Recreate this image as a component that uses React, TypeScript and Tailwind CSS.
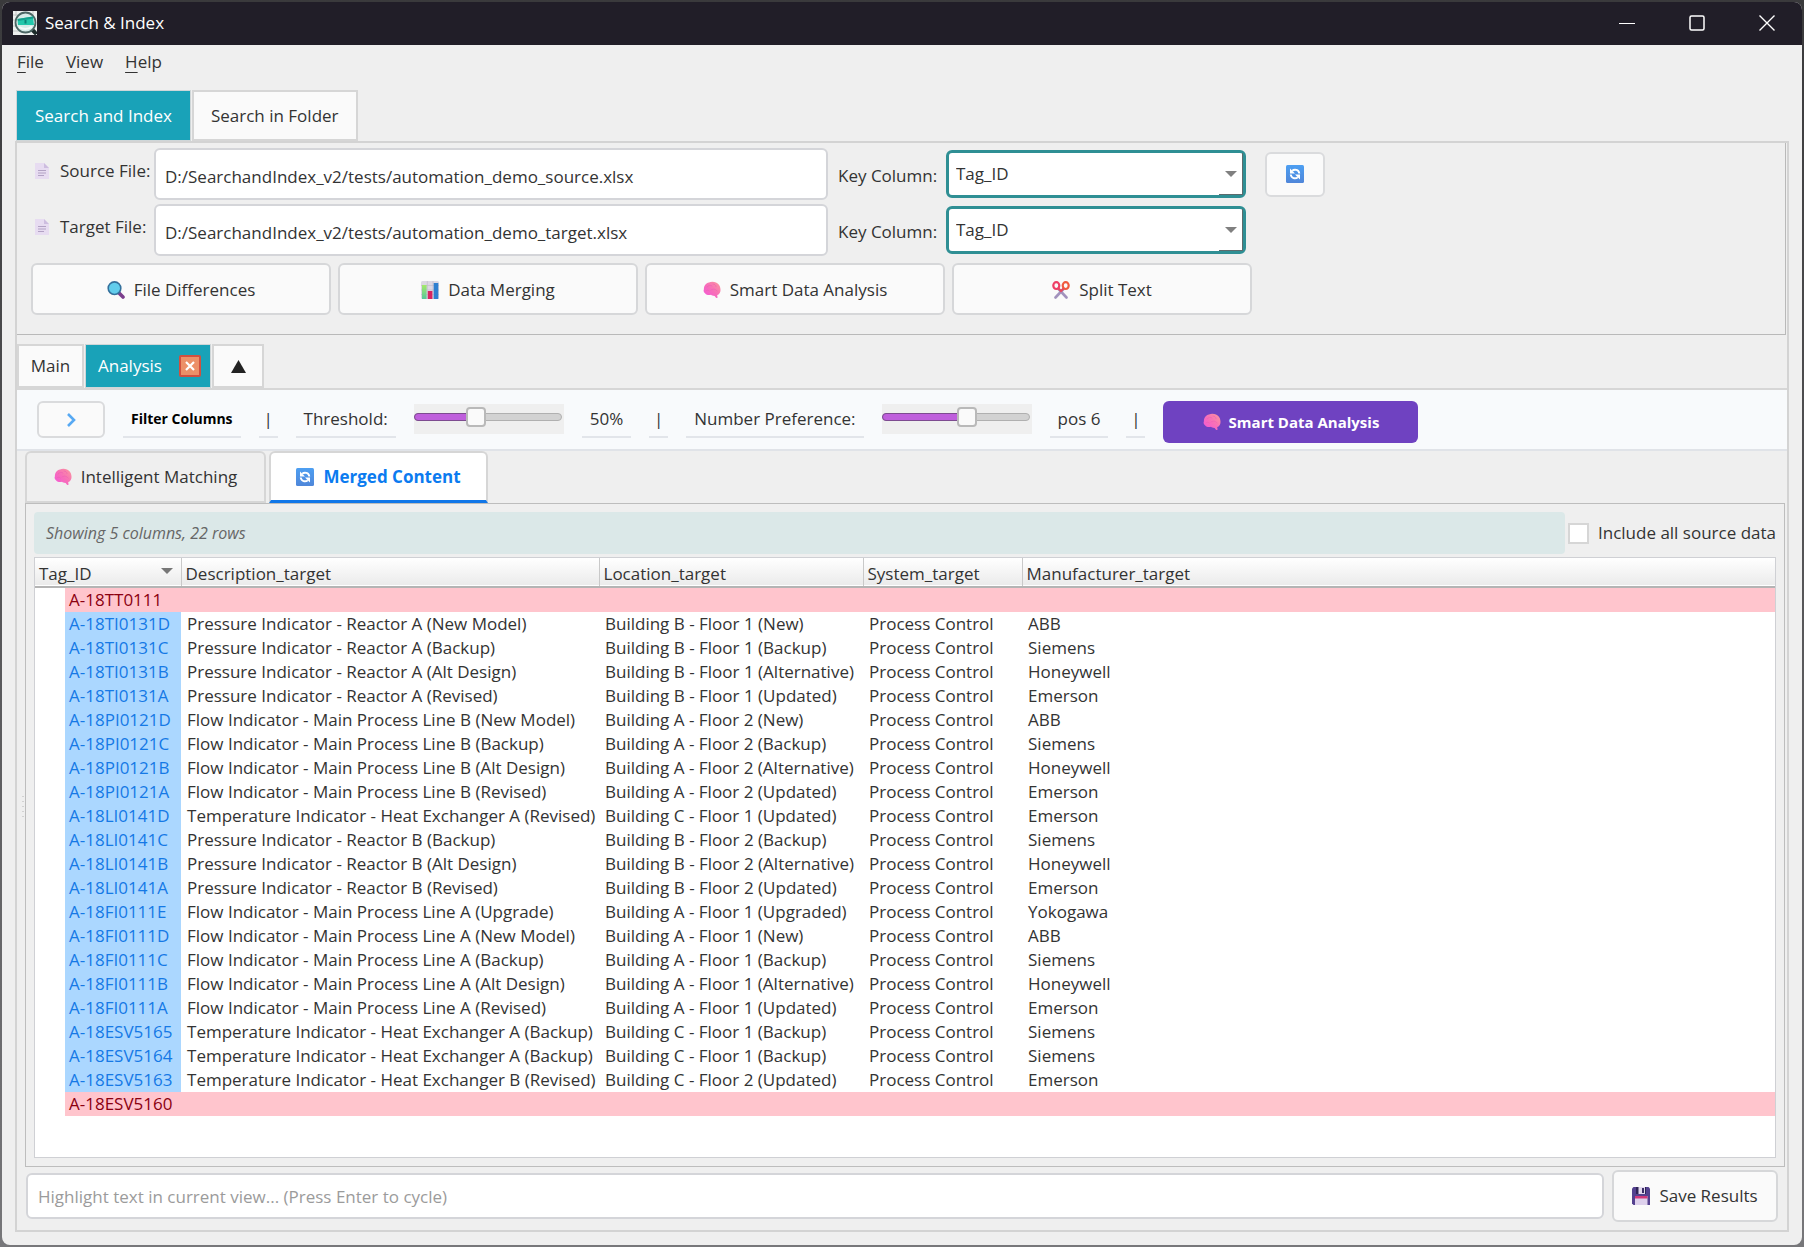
import { useState } from "react";
import type { ReactNode } from "react";

type Row = { tag: string; desc?: string; loc?: string; maker?: string };

const rows: Row[] = [
  { tag: "A-18TT0111" },
  { tag: "A-18TI0131D", desc: "Pressure Indicator - Reactor A (New Model)", loc: "Building B - Floor 1 (New)", maker: "ABB" },
  { tag: "A-18TI0131C", desc: "Pressure Indicator - Reactor A (Backup)", loc: "Building B - Floor 1 (Backup)", maker: "Siemens" },
  { tag: "A-18TI0131B", desc: "Pressure Indicator - Reactor A (Alt Design)", loc: "Building B - Floor 1 (Alternative)", maker: "Honeywell" },
  { tag: "A-18TI0131A", desc: "Pressure Indicator - Reactor A (Revised)", loc: "Building B - Floor 1 (Updated)", maker: "Emerson" },
  { tag: "A-18PI0121D", desc: "Flow Indicator - Main Process Line B (New Model)", loc: "Building A - Floor 2 (New)", maker: "ABB" },
  { tag: "A-18PI0121C", desc: "Flow Indicator - Main Process Line B (Backup)", loc: "Building A - Floor 2 (Backup)", maker: "Siemens" },
  { tag: "A-18PI0121B", desc: "Flow Indicator - Main Process Line B (Alt Design)", loc: "Building A - Floor 2 (Alternative)", maker: "Honeywell" },
  { tag: "A-18PI0121A", desc: "Flow Indicator - Main Process Line B (Revised)", loc: "Building A - Floor 2 (Updated)", maker: "Emerson" },
  { tag: "A-18LI0141D", desc: "Temperature Indicator - Heat Exchanger A (Revised)", loc: "Building C - Floor 1 (Updated)", maker: "Emerson" },
  { tag: "A-18LI0141C", desc: "Pressure Indicator - Reactor B (Backup)", loc: "Building B - Floor 2 (Backup)", maker: "Siemens" },
  { tag: "A-18LI0141B", desc: "Pressure Indicator - Reactor B (Alt Design)", loc: "Building B - Floor 2 (Alternative)", maker: "Honeywell" },
  { tag: "A-18LI0141A", desc: "Pressure Indicator - Reactor B (Revised)", loc: "Building B - Floor 2 (Updated)", maker: "Emerson" },
  { tag: "A-18FI0111E", desc: "Flow Indicator - Main Process Line A (Upgrade)", loc: "Building A - Floor 1 (Upgraded)", maker: "Yokogawa" },
  { tag: "A-18FI0111D", desc: "Flow Indicator - Main Process Line A (New Model)", loc: "Building A - Floor 1 (New)", maker: "ABB" },
  { tag: "A-18FI0111C", desc: "Flow Indicator - Main Process Line A (Backup)", loc: "Building A - Floor 1 (Backup)", maker: "Siemens" },
  { tag: "A-18FI0111B", desc: "Flow Indicator - Main Process Line A (Alt Design)", loc: "Building A - Floor 1 (Alternative)", maker: "Honeywell" },
  { tag: "A-18FI0111A", desc: "Flow Indicator - Main Process Line A (Revised)", loc: "Building A - Floor 1 (Updated)", maker: "Emerson" },
  { tag: "A-18ESV5165", desc: "Temperature Indicator - Heat Exchanger A (Backup)", loc: "Building C - Floor 1 (Backup)", maker: "Siemens" },
  { tag: "A-18ESV5164", desc: "Temperature Indicator - Heat Exchanger A (Backup)", loc: "Building C - Floor 1 (Backup)", maker: "Siemens" },
  { tag: "A-18ESV5163", desc: "Temperature Indicator - Heat Exchanger B (Revised)", loc: "Building C - Floor 2 (Updated)", maker: "Emerson" },
  { tag: "A-18ESV5160" },
];

function AppIcon() {
  return (
    <svg className="size-6 shrink-0" viewBox="0 0 24 24" aria-hidden="true">
      <rect width="24" height="24" fill="#eef0ef" />
      <path d="M0 4h5M0 9h3M0 15h3M0 20h6M3 0v5M20 0v4" stroke="#c3c8c7" strokeWidth="1" />
      <path d="M18 17.500l5.500 5.500" stroke="#1d2b2a" strokeWidth="4" />
      <circle cx="12.500" cy="11.500" r="10" fill="#d6ebe8" stroke="#4c6664" strokeWidth="1.800" />
      <path d="M4.500 8 20 5.500l1 8.500H5z" fill="#22c7ab" />
      <path d="M4.500 8 20 5.500l.3 2L5 10z" fill="#149f8c" />
      <path d="M11.500 9h2v3.500h-2z" fill="#0b8579" />
      <path d="M6 16c4 2.500 9 2.500 13-.5" stroke="#f4fbfa" strokeWidth="2" fill="none" />
    </svg>
  );
}

function PageIcon() {
  return (
    <svg className="h-4 w-[14px] shrink-0" viewBox="0 0 14 16" aria-hidden="true">
      <path d="M0 0h9l5 5v11H0z" fill="#e7dcf1" />
      <path d="M9 0l5 5H9z" fill="#cdbddf" />
      <path d="M3 7.500h8M3 10h8M3 12.500h6" stroke="#b2a2c4" strokeWidth="1" />
    </svg>
  );
}

function SearchIcon() {
  return (
    <svg className="size-[18px] shrink-0" viewBox="0 0 18 18" aria-hidden="true">
      <path d="M11.500 11.500l4.500 4.500" stroke="#7b3f8d" strokeWidth="3.600" strokeLinecap="round" />
      <circle cx="7.500" cy="7.200" r="6.300" fill="#62cdec" stroke="#34709c" strokeWidth="1.600" />
    </svg>
  );
}

function ChartIcon() {
  return (
    <svg className="size-[18px] shrink-0" viewBox="0 0 18 18" aria-hidden="true">
      <defs>
        <linearGradient id="barGreen" x1="0" y1="0" x2="0" y2="1">
          <stop offset="0" stopColor="#a5e86b" />
          <stop offset="1" stopColor="#57c79a" />
        </linearGradient>
      </defs>
      <rect width="18" height="18" rx="1.500" fill="#dcd7e3" />
      <path d="M0 4.500h18M0 9h18M0 13.500h18M6.300 0v18M12 0v18" stroke="#c2bccb" strokeWidth=".7" />
      <rect x="1" y="4" width="4.600" height="14" fill="url(#barGreen)" />
      <rect x="6.800" y="10" width="4.600" height="8" fill="#d8245f" />
      <rect x="12.700" y="2" width="4.600" height="16" fill="#2f7fd0" />
    </svg>
  );
}

function BrainIcon() {
  return (
    <svg className="size-[18px] shrink-0" viewBox="0 0 18 18" aria-hidden="true">
      <defs>
        <linearGradient id="brainPink" x1="1" y1="0" x2="0" y2="1">
          <stop offset="0" stopColor="#fb9a9c" />
          <stop offset=".5" stopColor="#f76fb8" />
          <stop offset="1" stopColor="#f553dc" />
        </linearGradient>
      </defs>
      <path
        d="M6 1.500C8 .3 11 .4 13 1.600c2.400.9 4 3 4.300 5.400.5 2.300.3 4.600-1.300 6-.5.600-1.200.9-1.800 1l.4 2.800-1.400.300-1.600-2.200c-1.900-.1-2.900-.5-3.600-1.100-2.200.6-4.600.1-5.800-1.300-1.500-1-2-2.700-1.300-4.200C.8 4.600 3 2 6 1.500z"
        fill="url(#brainPink)"
      />
      <path
        d="M4 6c1.500-2 3.500-2 5-1M10 3c1.500 0 3 1 3 2.500M8 9c2-1.500 5-1 6 1M3 10c1-1 2.500-1 3.500 0"
        stroke="#ee62b4"
        strokeWidth=".7"
        fill="none"
        strokeLinecap="round"
      />
    </svg>
  );
}

function ScissorsIcon() {
  return (
    <svg className="size-[18px] shrink-0" viewBox="0 0 18 18" fill="none" aria-hidden="true">
      <path d="M6.500 8 14.500 16.500M11.500 8 3.500 16.500" stroke="#a292bd" strokeWidth="2.600" strokeLinecap="round" />
      <ellipse cx="4.300" cy="4.600" rx="3" ry="3.400" stroke="#ee3f66" strokeWidth="2.200" />
      <ellipse cx="13.700" cy="4.600" rx="3" ry="3.400" stroke="#f0593f" strokeWidth="2.200" />
      <path d="M6.500 7.500 9 10l2.500-2.500" stroke="#e8475f" strokeWidth="2" />
    </svg>
  );
}

function SyncIcon() {
  return (
    <svg className="size-[18px] shrink-0" viewBox="0 0 18 18" fill="none" aria-hidden="true">
      <defs>
        <linearGradient id="syncBlue" x1="0" y1="0" x2="0" y2="1">
          <stop offset="0" stopColor="#4d9ff2" />
          <stop offset="1" stopColor="#4f86d9" />
        </linearGradient>
      </defs>
      <rect width="18" height="18" rx="1.500" fill="url(#syncBlue)" />
      <path d="M6.200 5.800C8.500 3.800 12.800 4.500 13.300 8.500M11.800 12.200C9.500 14.200 5.200 13.500 4.700 9.500" stroke="#fff" strokeWidth="1.900" />
      <path d="M4 3.500v5h5zM14 14.500v-5H9z" fill="#fff" />
    </svg>
  );
}

function FloppyIcon() {
  return (
    <svg className="size-[18px] shrink-0" viewBox="0 0 18 18" aria-hidden="true">
      <path d="M0 1.500 1.500 0h15L18 1.500V18H1.500L0 16.500z" fill="#54418f" />
      <rect x="4" width="10" height="7" fill="#2f2457" />
      <rect x="6.500" width="6.500" height="7" fill="#e2d9ee" />
      <rect x="10" y="1" width="2" height="5" fill="#3b2d66" />
      <rect x="3" y="9" width="12.500" height="9" fill="#ddd0ec" />
      <rect x="3" y="9" width="12.500" height="2.500" fill="#d1397b" />
    </svg>
  );
}

function FileRow({ id, label, value }: { id: string; label: string; value: string }) {
  const key = id + "-key";
  return (
    <div className="flex items-center">
      <label htmlFor={id} className="mb-[6px] flex w-[119px] items-center gap-[11px]">
        <PageIcon />
        <span className="whitespace-nowrap">{label}</span>
      </label>
      <input
        id={id}
        defaultValue={value}
        className="h-[52px] w-[674px] rounded-md border-2 border-[#d4d5d9] bg-white px-[9px] pt-1 outline-none"
      />
      <label htmlFor={key} className="ml-[10px] w-[108px] pt-[3px] whitespace-nowrap">
        Key Column:
      </label>
      <div className="relative">
        <select
          id={key}
          className="block h-12 w-[300px] appearance-none rounded-md border-[3px] border-[#2f8f94] bg-white px-[7px] outline-none"
        >
          <option>Tag_ID</option>
        </select>
        <div className="pointer-events-none absolute right-[3px] bottom-[3px] h-[42px] w-6 border-r border-b border-[#5c6b6d]" />
        <svg className="pointer-events-none absolute top-[21px] right-[9px] h-[6px] w-3" viewBox="0 0 12 6" aria-hidden="true">
          <path d="M0 0h12L6 6z" fill="#808080" />
        </svg>
      </div>
      {id === "source" && (
        <button
          aria-label="Reload columns"
          className="ml-[19px] flex h-[45px] w-[60px] items-center justify-center rounded-md border-2 border-[#dadbdd] bg-[#fafafa]"
        >
          <SyncIcon />
        </button>
      )}
    </div>
  );
}

function ActionButton({ icon, children }: { icon: ReactNode; children: ReactNode }) {
  return (
    <button className="flex h-[52px] w-[300px] items-center justify-center gap-[9px] rounded-md border-2 border-[#d6d7d9] bg-[#fafafa] pt-[2px]">
      {icon}
      <span>{children}</span>
    </button>
  );
}

function Cell({ children }: { children: ReactNode }) {
  return <span className="flex h-[37px] items-center border-b-2 border-[#e2e5ea] px-2 whitespace-nowrap">{children}</span>;
}

function Bar() {
  return (
    <span className="flex h-[37px] w-[19px] items-center justify-center border-b-2 border-[#e2e5ea]" aria-hidden="true">
      |
    </span>
  );
}

function Slider({ label, value, onChange }: { label: string; value: number; onChange: (n: number) => void }) {
  return (
    <span className="mt-[3px] flex h-[30px] w-[150px] items-center bg-[#efefef]">
      <span className="relative mb-1 flex h-2 w-[148px] items-center rounded-sm border border-[#b0b0b0] bg-[#d2d2d2]">
        <span
          className="absolute -top-px -left-px h-2 rounded-l-sm border border-[#7d4b90] bg-[#bf5fdc]"
          style={{ width: `${value}%` }}
        />
        <input
          type="range"
          aria-label={label}
          min={0}
          max={100}
          value={value}
          onChange={(e) => onChange(Number(e.target.value))}
          className="relative h-5 w-full appearance-none bg-transparent [&::-webkit-slider-thumb]:h-5 [&::-webkit-slider-thumb]:w-5 [&::-webkit-slider-thumb]:appearance-none [&::-webkit-slider-thumb]:rounded-sm [&::-webkit-slider-thumb]:border-2 [&::-webkit-slider-thumb]:border-[#b9b9b9] [&::-webkit-slider-thumb]:bg-[#fafafa]"
        />
      </span>
    </span>
  );
}

function SplitterGrip() {
  return (
    <svg className="absolute top-[44%] -left-1 h-[26px] w-[2px]" viewBox="0 0 2 26" aria-hidden="true">
      <path d="M1 1v25" stroke="#b4b4b4" strokeWidth="1" strokeDasharray="1 4" />
    </svg>
  );
}

export default function App() {
  const [threshold, setThreshold] = useState(41);
  const [pref, setPref] = useState(59);
  const head = "border-r border-[#c9c9c9] px-1 pt-1 text-left leading-6 font-normal";

  return (
    <div className="flex min-h-screen flex-col bg-linear-to-b from-[#3a3a3c] to-[#77777a] p-[2px] font-['Open_Sans',sans-serif] text-[17px] leading-6 text-[#333]">
      <div className="flex flex-1 flex-col overflow-hidden rounded-lg bg-[#efefef]">
        <header className="flex h-[43px] items-center bg-[#211e28] pb-[2px] pl-[11px] text-white">
          <AppIcon />
          <h1 className="ml-2 flex-1">Search &amp; Index</h1>
          <button aria-label="Minimize" className="flex h-full w-[70px] items-center justify-center">
            <svg className="size-4" viewBox="0 0 16 16" stroke="#fff" aria-hidden="true">
              <path d="M0 8.500h16" />
            </svg>
          </button>
          <button aria-label="Maximize" className="flex h-full w-[70px] items-center justify-center">
            <svg className="size-4" viewBox="0 0 16 16" stroke="#fff" strokeWidth="1.500" fill="none" aria-hidden="true">
              <rect x="1" y="1" width="14" height="14" rx="1.500" />
            </svg>
          </button>
          <button aria-label="Close" className="flex h-full w-[70px] items-center justify-center">
            <svg className="size-4" viewBox="0 0 16 16" stroke="#fff" strokeWidth="1.400" aria-hidden="true">
              <path d="M.5.500l15 15M15.500.500l-15 15" />
            </svg>
          </button>
        </header>

        <nav className="flex h-[45px] items-start gap-[22px] pt-[5px] pl-[15px]">
          {["File", "View", "Help"].map((m) => (
            <button key={m}>
              <span className="underline underline-offset-4">{m[0]}</span>
              {m.slice(1)}
            </button>
          ))}
        </nav>

        <div className="flex gap-px pl-[14px]" role="tablist">
          <button role="tab" aria-selected="true" className="h-[51px] border border-[#cfd6d8] bg-[#19a2b8] px-[18px] text-white">
            Search and Index
          </button>
          <button role="tab" aria-selected="false" className="h-[51px] border-2 border-[#d6d6d6] bg-[#fafafa] px-[17px]">
            Search in Folder
          </button>
        </div>

        <main className="mx-[13px] mb-[13px] flex flex-1 flex-col border-2 border-[#d3d3d3]">
          <section className="mr-px flex h-[192px] flex-col border-r border-b border-[#b9b9b9] pt-[5px] pl-[14px]">
            <div className="flex flex-col gap-1 pl-1">
              <FileRow id="source" label="Source File:" value="D:/SearchandIndex_v2/tests/automation_demo_source.xlsx" />
              <FileRow id="target" label="Target File:" value="D:/SearchandIndex_v2/tests/automation_demo_target.xlsx" />
            </div>
            <div className="mt-[7px] flex gap-[7px]">
              <ActionButton icon={<SearchIcon />}>File Differences</ActionButton>
              <ActionButton icon={<ChartIcon />}>Data Merging</ActionButton>
              <ActionButton icon={<BrainIcon />}>Smart Data Analysis</ActionButton>
              <ActionButton icon={<ScissorsIcon />}>Split Text</ActionButton>
            </div>
          </section>

          <div className="mt-[9px] flex gap-px" role="tablist">
            <button role="tab" aria-selected="false" className="h-11 w-[67px] border-2 border-[#d6d6d6] bg-[#fafafa]">
              Main
            </button>
            <div className="flex h-11 w-[126px] items-center justify-between border border-[#cfd6d8] bg-[#19a2b8] pr-[9px] pl-3 text-white">
              <button role="tab" aria-selected="true">Analysis</button>
              <button aria-label="Close Analysis" className="flex h-[22px] w-[22px] items-center justify-center rounded-xs border-2 border-[#d1503f] bg-[#ec9068]">
                <svg className="size-[10px]" viewBox="0 0 10 10" stroke="#fff" strokeWidth="2.200" aria-hidden="true">
                  <path d="M1 1l8 8M9 1 1 9" />
                </svg>
              </button>
            </div>
            <button aria-label="Collapse" className="flex h-11 w-[52px] items-center justify-center border-2 border-[#d6d6d6] bg-[#fafafa]">
              <svg className="h-[13px] w-[15px]" viewBox="0 0 15 13" aria-hidden="true">
                <path d="M7.500 0 15 13H0z" fill="#222" />
              </svg>
            </button>
          </div>

          <div className="flex flex-wrap items-start gap-x-[18px] border-t-2 border-b-2 border-[#d6d6d6] border-b-[#e0e3e8] bg-[#f8fafc] pt-[11px] pb-[6px] pl-5">
            <button aria-label="Expand" className="flex h-[37px] w-[68px] items-center justify-center rounded-md border-2 border-[#dadbdd] bg-[#fafafa]">
              <svg className="h-[14px] w-[9px]" viewBox="0 0 9 14" fill="none" stroke="#57a9f3" strokeWidth="2.600" aria-hidden="true">
                <path d="M1 1l6 6-6 6" />
              </svg>
            </button>
            <Cell><b className="text-sm text-black">Filter Columns</b></Cell>
            <Bar />
            <Cell>Threshold:</Cell>
            <Slider label="Threshold" value={threshold} onChange={setThreshold} />
            <Cell>50%</Cell>
            <Bar />
            <Cell>Number Preference:</Cell>
            <Slider label="Number Preference" value={pref} onChange={setPref} />
            <Cell>pos 6</Cell>
            <Bar />
            <button className="flex h-[42px] w-[255px] items-center justify-center gap-2 rounded-md bg-[#6f42c1] text-[15px] font-bold text-white">
              <BrainIcon />
              Smart Data Analysis
            </button>
          </div>

          <div className="flex gap-[3px] pl-2" role="tablist">
            <button role="tab" aria-selected="false" className="flex h-[52px] w-[241px] items-center justify-center gap-[9px] rounded-t-md border-2 border-[#d6d6d6]">
              <BrainIcon />
              Intelligent Matching
            </button>
            <button
              role="tab"
              aria-selected="true"
              className="flex h-[52px] w-[219px] items-center justify-center gap-[9px] rounded-t-md border-2 border-b-[3px] border-[#d6d6d6] border-b-[#1177e8] bg-white font-bold text-[#0b7bf0]"
            >
              <SyncIcon />
              Merged Content
            </button>
          </div>

          <section className="relative mr-[2px] ml-2 flex flex-1 flex-col border border-[#bdbdbd] px-2 pt-2 pb-2">
            <SplitterGrip />
            <div className="flex items-center gap-[3px]">
              <p className="flex h-[42px] flex-1 items-center rounded-sm bg-[#dbe8e8] pl-3 text-base text-[#666] italic">
                Showing 5 columns, 22 rows
              </p>
              <label className="flex items-center gap-[9px]">
                <input type="checkbox" className="size-[21px] appearance-none border-2 border-[#d6d6d6] bg-white" />
                Include all source data
              </label>
            </div>
            <div className="mt-[3px] flex-1 border border-[#cfd0d4] bg-white">
              <table className="w-full table-fixed border-collapse whitespace-nowrap">
                <colgroup>
                  <col className="w-[30px]" />
                  <col className="w-[116px]" />
                  <col className="w-[418px]" />
                  <col className="w-[264px]" />
                  <col className="w-[159px]" />
                  <col />
                </colgroup>
                <thead>
                  <tr className="border-b-2 border-[#b4b4b4] bg-linear-to-b from-white to-[#ebebeb]">
                    <th colSpan={2} className={head}>
                      <span className="flex items-start justify-between pr-1">
                        Tag_ID
                        <svg className="mt-[6px] h-[6px] w-3" viewBox="0 0 12 6" aria-hidden="true">
                          <path d="M0 0h12L6 6z" fill="#777" />
                        </svg>
                      </span>
                    </th>
                    <th className={head}>Description_target</th>
                    <th className={head}>Location_target</th>
                    <th className={head}>System_target</th>
                    <th className="px-1 pt-1 text-left leading-6 font-normal">Manufacturer_target</th>
                  </tr>
                </thead>
                <tbody>
                  {rows.map((r) =>
                    r.desc ? (
                      <tr key={r.tag} className="h-6">
                        <td />
                        <td className="bg-[#abd7ff] pl-1 text-[#1579e6]">{r.tag}</td>
                        <td className="pl-[6px]">{r.desc}</td>
                        <td className="pl-[6px]">{r.loc}</td>
                        <td className="pl-[6px]">Process Control</td>
                        <td className="pl-[6px]">{r.maker}</td>
                      </tr>
                    ) : (
                      <tr key={r.tag} className="h-6">
                        <td />
                        <td colSpan={5} className="bg-[#ffc5cd] pl-1 text-[#8b0010]">
                          {r.tag}
                        </td>
                      </tr>
                    ),
                  )}
                </tbody>
              </table>
            </div>
          </section>

          <div className="flex items-center gap-2 pt-[3px] pr-[9px] pb-2 pl-[9px]">
            <input
              aria-label="Highlight text"
              placeholder="Highlight text in current view... (Press Enter to cycle)"
              className="h-[46px] min-w-0 flex-1 rounded-md border-2 border-[#d4d5d9] bg-white px-[10px] outline-none placeholder:text-[#9b9b9b]"
            />
            <button className="flex h-[52px] w-[166px] items-center justify-center gap-[9px] rounded-md border-2 border-[#d6d7d9] bg-[#fafafa]">
              <FloppyIcon />
              Save Results
            </button>
          </div>
        </main>
      </div>
    </div>
  );
}
